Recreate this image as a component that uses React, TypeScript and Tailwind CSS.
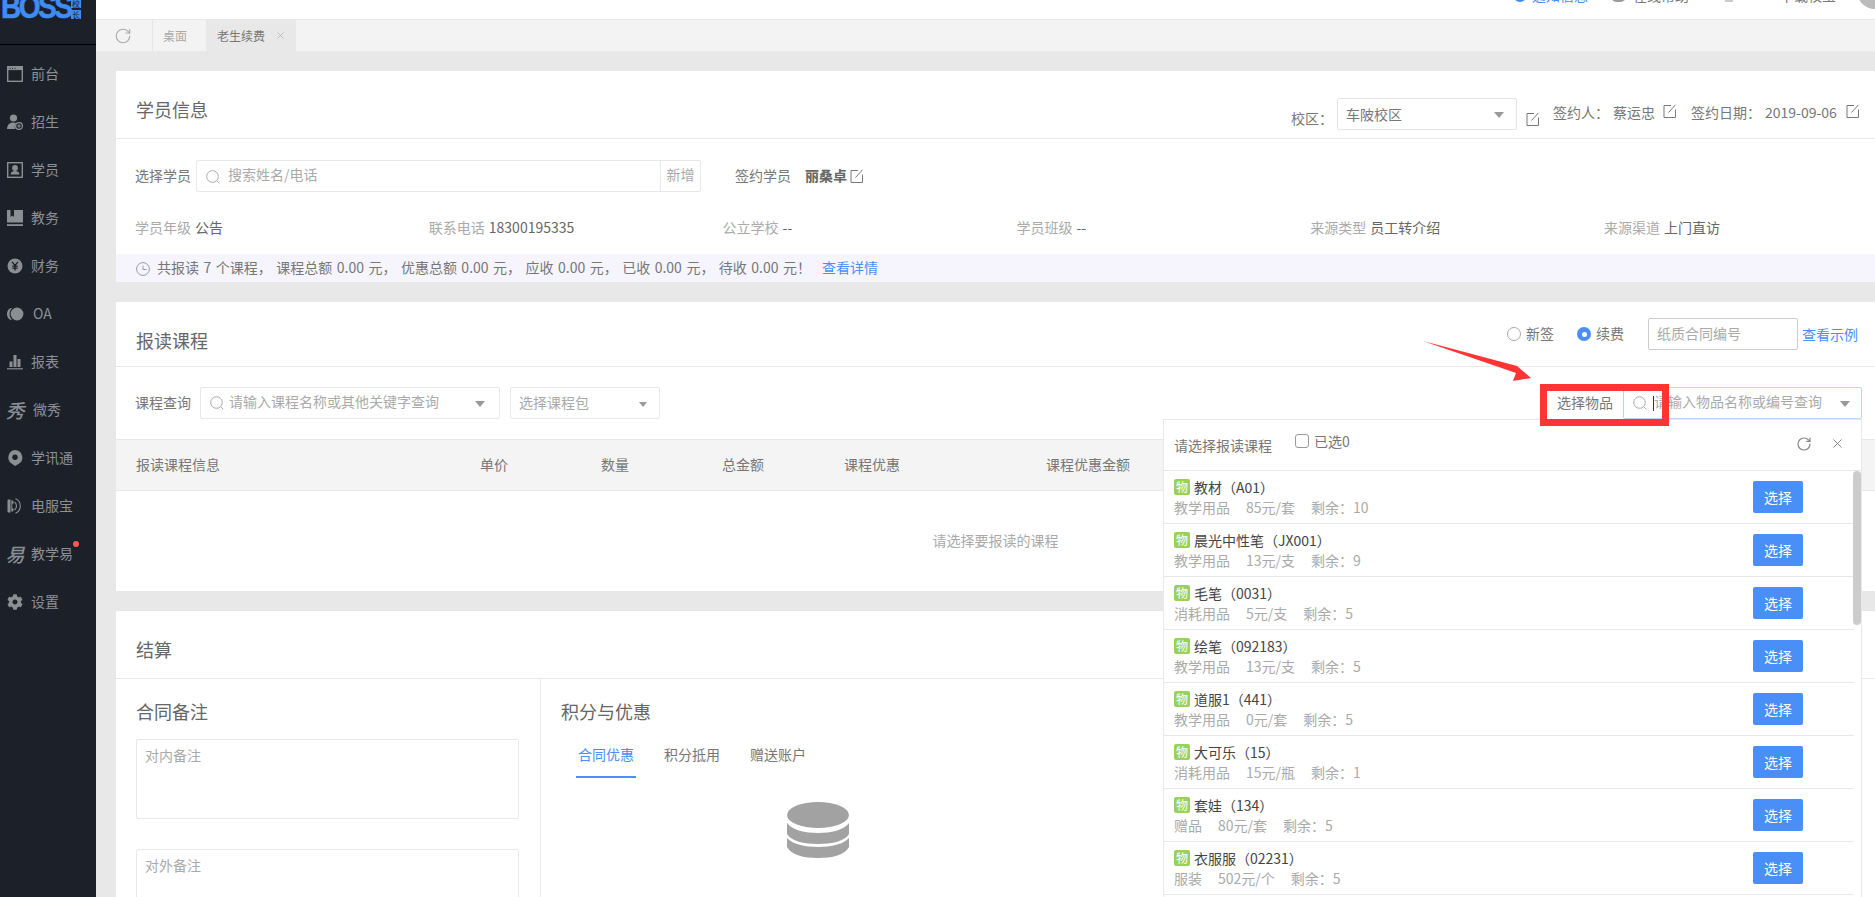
import { RotateCw, X } from "lucide-react";
import { FaCog } from "react-icons/fa";

const font = "font-['Noto_Sans_CJK_SC','Noto_Sans',sans-serif] [text-spacing-trim:space-all]";

function SearchIcon({ className = "" }: { className?: string }) {
  return (
    <svg viewBox="0 0 14 14" className={`w-[14px] h-[14px] shrink-0 ${className}`} fill="none" stroke="#aaa" strokeWidth="1">
      <circle cx="6.5" cy="6.5" r="5.8" />
      <path d="M10.8 10.8 L13.4 13.4" />
    </svg>
  );
}

function EditIcon() {
  return (
    <svg viewBox="0 0 14 14" className="w-[14px] h-[14px] shrink-0" fill="none" stroke="#777" strokeWidth="1">
      <path d="M8 1.5H1V13.5H12.5V5.5" />
      <path d="M5.5 8.5L12.5 .8" />
    </svg>
  );
}

function Caret({ small = false }: { small?: boolean }) {
  return (
    <span
      className={
        small
          ? "w-0 h-0 border-x-[4px] border-x-transparent border-t-[5px] border-t-[#999] shrink-0 mt-[2px]"
          : "w-0 h-0 border-x-[5px] border-x-transparent border-t-[6px] border-t-[#999] shrink-0 mt-[2px]"
      }
    />
  );
}

const iconFill = "#8a8e95";

const navItems = [
  {
    label: "前台",
    icon: (
      <svg viewBox="0 0 16 16" className="w-4 h-4">
        <rect x=".7" y=".7" width="14.6" height="14.6" fill="none" stroke={iconFill} strokeWidth="1.4" />
        <rect x=".7" y=".7" width="14.6" height="3.4" fill={iconFill} />
        <path d="M2.5 2.4h1M5 2.4h1M7.5 2.4h1" stroke="#1c2029" strokeWidth="1" />
      </svg>
    ),
  },
  {
    label: "招生",
    icon: (
      <svg viewBox="0 0 16 16" className="w-4 h-4">
        <circle cx="6.5" cy="4" r="3.6" fill={iconFill} />
        <path d="M0 15c.3-4.5 2.5-6.6 6.5-6.6 1 0 2 .2 2.6.5-1.5 1.600-1.800 4.300-.6 6.100z" fill={iconFill} />
        <circle cx="12" cy="12" r="3.400" fill="none" stroke={iconFill} strokeWidth="1.300" />
        <path d="M10.200 12h3.600M12 10.200v3.600" stroke={iconFill} strokeWidth="1.200" />
      </svg>
    ),
  },
  {
    label: "学员",
    icon: (
      <svg viewBox="0 0 16 16" className="w-4 h-4">
        <rect x=".7" y=".7" width="14.6" height="14.6" fill="none" stroke={iconFill} strokeWidth="1.4" />
        <circle cx="8" cy="6" r="2.900" fill={iconFill} />
        <path d="M3.500 12.500c.3-2.600 2-3.500 4.500-3.500s4.200.9 4.500 3.500z" fill={iconFill} />
      </svg>
    ),
  },
  {
    label: "教务",
    icon: (
      <svg viewBox="0 0 16 16" className="w-4 h-4">
        <path d="M0 0h16v12.500H0z" fill={iconFill} />
        <path d="M0 14.200h16V16H0z" fill={iconFill} />
        <path d="M3.500 0h3.500v7L5.250 5.600 3.500 7z" fill="#1c2029" />
      </svg>
    ),
  },
  {
    label: "财务",
    icon: (
      <svg viewBox="0 0 16 16" className="w-4 h-4">
        <circle cx="8" cy="8" r="7.500" fill={iconFill} />
        <path d="M5 3.800L8 7.500l3-3.700M8 7.500v5M5.300 8.200h5.400M5.300 10.200h5.400" fill="none" stroke="#1c2029" strokeWidth="1.300" />
      </svg>
    ),
  },
  {
    label: "OA",
    icon: (
      <svg viewBox="0 0 18 14" className="w-[18px] h-[14px] shrink-0">
        <path d="M6 1C3 1 1 3.700 1 7s2 6 5 6c-1.500-1.500-2.400-3.700-2.400-6S4.500 2.500 6 1z" fill={iconFill} />
        <circle cx="11" cy="7" r="6.400" fill={iconFill} />
      </svg>
    ),
  },
  {
    label: "报表",
    icon: (
      <svg viewBox="0 0 16 16" className="w-4 h-4">
        <path d="M2.500 7.500h3V13h-3zM6.500 1h3v12h-3zM10.500 5h3v8h-3z" fill={iconFill} />
        <path d="M0 14.800h16" stroke={iconFill} strokeWidth="1.200" />
      </svg>
    ),
  },
  {
    label: "微秀",
    icon: <span className="text-[19px] leading-4 italic font-medium text-[#8a8e95]">秀</span>,
  },
  {
    label: "学讯通",
    icon: (
      <svg viewBox="0 0 16 16" className="w-4 h-4">
        <path d="M8 0a7.500 7.500 0 0 1 3.500 14L8 16l-2.800-2A7.500 7.500 0 0 1 8 0z" fill={iconFill} />
        <circle cx="8" cy="7.300" r="2.700" fill="#1c2029" />
      </svg>
    ),
  },
  {
    label: "电服宝",
    icon: (
      <svg viewBox="0 0 16 16" className="w-4 h-4" fill="none" stroke={iconFill} strokeWidth="1.100">
        <path d="M1.500 1.500h2v13h-2a1 1 0 0 1-1-1v-11a1 1 0 0 1 1-1z" fill={iconFill} stroke="none" />
        <path d="M4.300 2.500H6l.8 2.500-1.500 1v4l1.500 1L6 13.500H4.300z" fill={iconFill} stroke="none" />
        <path d="M7.500 4a5 5 0 0 1 0 8" />
        <path d="M8.500 .8a7.800 7.800 0 0 1 0 14.400" />
      </svg>
    ),
  },
  {
    label: "教学易",
    icon: <span className="text-[19px] leading-4 italic font-medium text-[#8a8e95]">易</span>,
    dot: true,
  },
  {
    label: "设置",
    icon: <FaCog className="w-4 h-4 text-[#8a8e95]" />,
  },
];

const goods = [
  { name: "教材（A01）", sub: ["教学用品", "85元/套", "剩余：10"] },
  { name: "晨光中性笔（JX001）", sub: ["教学用品", "13元/支", "剩余：9"] },
  { name: "毛笔（0031）", sub: ["消耗用品", "5元/支", "剩余：5"] },
  { name: "绘笔（092183）", sub: ["教学用品", "13元/支", "剩余：5"] },
  { name: "道服1（441）", sub: ["教学用品", "0元/套", "剩余：5"] },
  { name: "大可乐（15）", sub: ["消耗用品", "15元/瓶", "剩余：1"] },
  { name: "套娃（134）", sub: ["赠品", "80元/套", "剩余：5"] },
  { name: "衣服服（02231）", sub: ["服装", "502元/个", "剩余：5"] },
];

const studentInfo = [
  ["学员年级", "公告"],
  ["联系电话", "18300195335"],
  ["公立学校", "--"],
  ["学员班级", "--"],
  ["来源类型", "员工转介绍"],
  ["来源渠道", "上门直访"],
];

function Sidebar() {
  return (
    <aside className="w-[96px] shrink-0 bg-[#1c2029] h-full">
      <div className="h-[45px] border-b border-black overflow-hidden">
        <div className="flex items-end h-[19px] pl-px">
          <span className="font-['Liberation_Sans',sans-serif] font-bold text-[28px] leading-[20px] tracking-[-2.5px] text-[#3f8cf3] w-[70px] shrink-0 scale-y-[1.2] origin-bottom [-webkit-text-stroke:0.5px_#3f8cf3]">
            BOSS
          </span>
          <div className="flex flex-col gap-[2px] shrink-0">
            <span className="w-[10px] h-[8px] bg-[#3f8cf3] text-[8px] leading-[8px] text-center text-[#1c2029] overflow-hidden">校</span>
            <span className="w-[10px] h-[9px] bg-[#3f8cf3] text-[8px] leading-[9px] text-center text-[#1c2029]">长</span>
          </div>
        </div>
      </div>
      <nav className="pt-[5px]">
        {navItems.map((item) => (
          <div key={item.label} className="h-[48px] flex items-center pl-[7px] text-[14px] text-[#8c9098]">
            <span className="w-4 flex justify-center">{item.icon}</span>
            <span className={`relative ml-2 pb-[2px] ${item.label === "OA" || item.label === "微秀" ? "pl-[2px]" : ""}`}>
              {item.label}
              {item.dot && <span className="absolute -right-[6px] -top-[2px] w-[6px] h-[6px] rounded-full bg-[#f55]" />}
            </span>
          </div>
        ))}
      </nav>
    </aside>
  );
}

function TopBar() {
  return (
    <div className="h-[20px] shrink-0 bg-white border-b border-[#e8e8e8] overflow-hidden flex justify-end text-[14px] leading-[14px] text-[#777]">
      <div className="flex items-end h-[2px]">
        <span className="w-[14px] h-[14px] rounded-full border-[3px] border-[#3f8cf3] mr-[5px] shrink-0" />
        <span className="text-[#3f8cf3] w-[78px] shrink-0">通知信息</span>
        <span className="w-[17px] h-[14px] rounded-full bg-[#999] mr-[6px] shrink-0" />
        <span className="w-[92px] shrink-0">在线帮助</span>
        <span className="w-[8px] h-[12px] bg-[#ccc] mr-[47px] shrink-0" />
        <span className="w-[77px] shrink-0">下载校宝</span>
        <span className="w-[36px] h-[36px] rounded-full bg-[#bbb] -mr-[18px] -mb-[7px] shrink-0" />
      </div>
    </div>
  );
}

function TabBar() {
  return (
    <div className="h-[31px] shrink-0 bg-[#f3f3f3] flex text-[12px]">
      <div className="w-[57px] flex items-center pl-[18px] border-r border-[#e6e6e6]">
        <RotateCw className="w-[18px] h-[18px] text-[#aaa]" strokeWidth={1.5} />
      </div>
      <div className="w-[53px] flex items-center pl-[10px] text-[#aaa]">桌面</div>
      <div className="w-[90px] bg-[#e8e8e8] flex items-center pl-[11px] text-[#777]">
        老生续费
        <X className="w-[11px] h-[11px] ml-[10px] text-[#aaa]" strokeWidth={1.5} />
      </div>
    </div>
  );
}

function StudentCard() {
  return (
    <section className="bg-white">
      <div className="h-[68px] border-b border-[#e8e8e8] flex justify-between pl-5 pr-[15px]">
        <h2 className="pt-[25px] text-[18px] leading-[26px] font-normal text-[#666]">学员信息</h2>
        <div className="flex text-[14px] leading-5 text-[#777]">
          <span className="mt-[37px] w-[46px]">校区：</span>
          <div className="mt-[27px] w-[180px] h-[32px] border border-[#e4e4e4] rounded-[2px] flex items-center justify-between pl-2 pr-3 text-[#777]">
            车陂校区
            <Caret />
          </div>
          <span className="mt-[41px] ml-[9px]">
            <EditIcon />
          </span>
          <span className="mt-[31px] ml-[13px] w-[60px]">签约人：</span>
          <span className="mt-[31px] w-[50px]">蔡运忠</span>
          <span className="mt-[33px]">
            <EditIcon />
          </span>
          <span className="mt-[31px] ml-[14px] w-[74px]">签约日期：</span>
          <span className="mt-[31px] w-[81px]">2019-09-06</span>
          <span className="mt-[33px]">
            <EditIcon />
          </span>
        </div>
      </div>
      <div className="mt-[21px] pl-[19px] flex items-center text-[14px] text-[#777] h-[32px]">
        <span className="w-[61px] pb-[2px]">选择学员</span>
        <div className="w-[505px] h-[32px] border border-[#e8e8e8] rounded-[2px] flex items-center">
          <SearchIcon className="ml-[9px] mt-[2px]" />
          <span className="ml-2 flex-1 text-[#aaa] pb-[4px]">搜索姓名/电话</span>
          <span className="w-[40px] h-full border-l border-[#e8e8e8] flex items-center justify-center text-[#aaa] pb-[4px]">新增</span>
        </div>
        <span className="ml-[34px] w-[70px] pb-[2px]">签约学员</span>
        <span className="font-bold text-[#666] w-[45px] pb-[2px]">丽桑卓</span>
        <EditIcon />
      </div>
      <div className="mt-[25px] pl-[19px] grid grid-cols-[repeat(6,293.8px)] text-[14px] leading-5">
        {studentInfo.map(([k, v]) => (
          <div key={k}>
            <span className="text-[#aaa]">{k}</span>
            <span className="ml-1 text-[#666]">{v}</span>
          </div>
        ))}
      </div>
      <div className="mt-[17px] h-[28px] bg-[#f6f5fd] flex items-center pl-5 pb-[2px] text-[14px] text-[#777]">
        <svg viewBox="0 0 14 14" className="w-[14px] h-[14px] mt-1" fill="none" stroke="#999" strokeWidth="1">
          <circle cx="7" cy="7" r="6.400" />
          <path d="M7 3.500V7.500H10.500" />
        </svg>
        <span className="ml-[7px] [word-spacing:1.35px]">共报读 7 个课程， 课程总额 0.00 元， 优惠总额 0.00 元， 应收 0.00 元， 已收 0.00 元， 待收 0.00 元！</span>
        <span className="ml-[11px] text-[#4a8ef8]">查看详情</span>
      </div>
    </section>
  );
}

function CourseCard() {
  return (
    <section className="bg-white h-[289px] flex flex-col">
      <div className="h-[65px] shrink-0 border-b border-[#e8e8e8] flex justify-between pl-5 pr-[17px]">
        <h2 className="pt-[25px] text-[18px] leading-[26px] font-normal text-[#666]">报读课程</h2>
        <div className="flex items-center h-[32px] mt-[16px] text-[14px] text-[#777]">
          <span className="w-[14px] h-[14px] rounded-full border border-[#aaa]" />
          <span className="ml-[5px] pb-[2px]">新签</span>
          <span className="ml-[23px] w-[14px] h-[14px] rounded-full bg-[#4a8ef8] flex items-center justify-center">
            <span className="w-[5px] h-[5px] rounded-full bg-white" />
          </span>
          <span className="ml-[5px] pb-[2px]">续费</span>
          <div className="ml-[24px] w-[150px] h-[32px] border border-[#ccc] rounded-[2px] flex items-center pl-2 pb-[2px] text-[#aaa]">纸质合同编号</div>
          <span className="ml-1 text-[#4a8ef8]">查看示例</span>
        </div>
      </div>
      <div className="h-[72px] shrink-0 pt-[20px] pl-[19px] pr-[13px] flex items-start text-[14px] text-[#777]">
        <span className="w-[65px] leading-[30px]">课程查询</span>
        <div className="w-[300px] h-[32px] border border-[#e8e8e8] rounded-[2px] flex items-center pl-[9px] pr-[14px] text-[#aaa]">
          <SearchIcon />
          <span className="ml-[5px] flex-1 pb-[4px]">请输入课程名称或其他关键字查询</span>
          <Caret />
        </div>
        <div className="ml-[10px] w-[150px] h-[32px] border border-[#e8e8e8] rounded-[2px] flex items-center justify-between pl-2 pr-3 text-[#aaa]">
          <span className="pb-[2px]">选择课程包</span>
          <Caret small />
        </div>
        <span className="ml-auto leading-[30px] text-[#777]">选择物品</span>
        <div className="ml-[10px] w-[239px] h-[32px] border border-[#bcd6f9] rounded-[2px] flex items-center pl-[9px] pr-[11px] text-[#aaa]">
          <SearchIcon />
          <span className="ml-[6px] h-[15px] w-px bg-[#333]" />
          <span className="flex-1 pb-[4px]">请输入物品名称或编号查询</span>
          <Caret />
        </div>
      </div>
      <div className="h-[52px] shrink-0 bg-[#f4f4f4] border-y border-[#e8e8e8] flex items-center pl-5 pb-[2px] text-[14px] text-[#777]">
        <span className="w-[344px]">报读课程信息</span>
        <span className="w-[121px]">单价</span>
        <span className="w-[121px]">数量</span>
        <span className="w-[122px]">总金额</span>
        <span className="w-[202px]">课程优惠</span>
        <span>课程优惠金额</span>
      </div>
      <div className="flex-1 flex items-center justify-center pb-[2px] text-[14px] text-[#aaa]">请选择要报读的课程</div>
    </section>
  );
}

function SettleCard() {
  return (
    <section className="bg-white flex-1 flex flex-col">
      <div className="h-[68px] shrink-0 border-b border-[#e8e8e8] pl-5">
        <h2 className="pt-[25px] text-[18px] leading-[26px] font-normal text-[#666]">结算</h2>
      </div>
      <div className="flex-1 flex">
        <div className="w-[425px] border-r border-[#e8e8e8] pt-[19px] pl-5">
          <h3 className="text-[18px] leading-[26px] font-normal text-[#666]">合同备注</h3>
          <div className="mt-[15px] w-[383px] h-[80px] border border-[#e8e8e8] rounded-[2px] pl-2 pt-[5px] text-[14px] leading-5 text-[#aaa]">对内备注</div>
          <div className="mt-[30px] w-[383px] h-[80px] border border-[#e8e8e8] rounded-[2px] pl-2 pt-[5px] text-[14px] leading-5 text-[#aaa]">对外备注</div>
        </div>
        <div className="flex-1 pt-[19px] pl-5">
          <h3 className="text-[18px] leading-[26px] font-normal text-[#666]">积分与优惠</h3>
          <div className="mt-[20px] ml-[15px] flex gap-[26px] text-[14px] leading-5">
            <span className="w-[60px] text-center h-[34px] border-b-[2px] border-[#4a8ef8] text-[#4a8ef8]">合同优惠</span>
            <span className="w-[60px] text-center text-[#777]">积分抵用</span>
            <span className="w-[60px] text-center text-[#777]">赠送账户</span>
          </div>
          <svg viewBox="0 0 62 56" className="ml-[226px] mt-[24px] w-[62px] h-[56px]" fill="#a2a2a2">
            <ellipse cx="31" cy="13" rx="31" ry="13" />
            <path d="M0 21c5 7 18 10 31 10s26-3 31-10v11c-4 7-17 10-31 10S4 39 0 32z" />
            <path d="M0 36c5 6 18 9 31 9s26-3 31-9v9c-4 8-17 11-31 11S4 53 0 45z" />
          </svg>
        </div>
      </div>
    </section>
  );
}

function GoodsPanel() {
  return (
    <div className="absolute left-[1163px] top-[419px] w-[699px] h-[478px] bg-white border-x border-t border-[#e8e8e8] overflow-hidden z-10">
      <div className="h-[51px] border-b border-[#e8e8e8] flex items-start pl-[10px] pr-[16px] text-[14px] text-[#777]">
        <span className="mt-[15px] leading-5">请选择报读课程</span>
        <span className="mt-[14px] ml-[23px] w-[14px] h-[14px] border border-[#999] rounded-[3px]" />
        <span className="mt-[11px] ml-[5px] leading-5">已选0</span>
        <RotateCw className="ml-auto mt-[16px] w-4 h-4 text-[#888]" strokeWidth={1.8} />
        <X className="ml-[18px] mt-[16px] w-[15px] h-[15px] text-[#888]" strokeWidth={1.6} />
      </div>
      <div className="relative">
        <div className="absolute right-0 top-0 w-2 h-[154px] bg-[#ccc] rounded-[4px]" />
        {goods.map((g) => (
          <div key={g.name} className="w-[690px] h-[53px] border-b border-[#e8e8e8] flex items-center justify-between pl-[10px] pr-[51px]">
            <div className="text-[14px] leading-5">
              <div className="flex items-center text-[#444]">
                <span className="w-4 h-4 bg-[#9ad15b] rounded-[2px] text-white text-[12px] leading-4 text-center mr-1">物</span>
                {g.name}
              </div>
              <div className="flex gap-4 text-[#aaa]">
                {g.sub.map((s) => (
                  <span key={s}>{s}</span>
                ))}
              </div>
            </div>
            <button className="w-[50px] h-[32px] bg-[#4a8ef8] rounded-[2px] text-white text-[14px]">选择</button>
          </div>
        ))}
      </div>
    </div>
  );
}

export default function App() {
  return (
    <div className={`relative flex h-[897px] w-[1875px] overflow-hidden bg-[#e8e8e8] ${font}`}>
      <Sidebar />
      <main className="flex-1 flex flex-col min-w-0">
        <TopBar />
        <TabBar />
        <div className="flex-1 flex flex-col gap-5 pt-5 pl-5">
          <StudentCard />
          <CourseCard />
          <SettleCard />
        </div>
      </main>
      <GoodsPanel />
      {/* red annotation drawn over the page */}
      <div className="absolute left-[1540px] top-[384px] w-[129px] h-[42px] border-[7px] border-[#ff3434] z-20" />
      <svg viewBox="0 0 120 50" className="absolute left-[1420px] top-[338px] w-[120px] h-[50px] z-20">
        <path d="M3 3L97 28L111 40L93 43L96 35Z" fill="#ff3434" />
      </svg>
    </div>
  );
}
